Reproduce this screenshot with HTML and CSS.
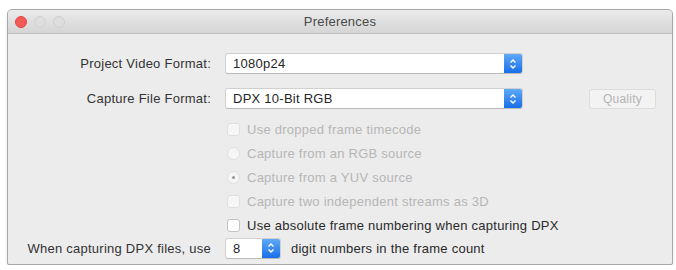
FILE: index.html
```html
<!DOCTYPE html>
<html>
<head>
<meta charset="utf-8">
<link rel="stylesheet" href="styles.css">
</head>
<body>
<div class="window">
  <div class="titlebar">
    <div class="lights">
      <span class="light red"></span>
      <span class="light grey"></span>
      <span class="light grey"></span>
    </div>
    <div class="title">Preferences</div>
  </div>
  <div class="content">
    <div class="row row-main">
      <div class="label">Project Video Format:</div>
      <div class="popup wide"><span class="value">1080p24</span><span class="cap"><svg width="8" height="12" viewBox="0 0 8 12"><path d="M1.5 4.5 L4 2 L6.5 4.5 M1.5 7.5 L4 10 L6.5 7.5" fill="none" stroke="#fff" stroke-width="1.4"/></svg></span></div>
    </div>
    <div class="row row-main second">
      <div class="label">Capture File Format:</div>
      <div class="popup wide"><span class="value">DPX 10-Bit RGB</span><span class="cap"><svg width="8" height="12" viewBox="0 0 8 12"><path d="M1.5 4.5 L4 2 L6.5 4.5 M1.5 7.5 L4 10 L6.5 7.5" fill="none" stroke="#fff" stroke-width="1.4"/></svg></span></div>
      <div class="button disabled">Quality</div>
    </div>
    <div class="options">
      <div class="opt disabled"><span class="check"></span>Use dropped frame timecode</div>
      <div class="opt disabled"><span class="radio"></span>Capture from an RGB source</div>
      <div class="opt disabled"><span class="radio on"></span>Capture from a YUV source</div>
      <div class="opt disabled"><span class="check"></span>Capture two independent streams as 3D</div>
      <div class="opt"><span class="check"></span>Use absolute frame numbering when capturing DPX</div>
    </div>
    <div class="row row-last">
      <div class="label">When capturing DPX files, use</div>
      <div class="popup small"><span class="value">8</span><span class="cap"><svg width="8" height="12" viewBox="0 0 8 12"><path d="M1.5 4.5 L4 2 L6.5 4.5 M1.5 7.5 L4 10 L6.5 7.5" fill="none" stroke="#fff" stroke-width="1.4"/></svg></span></div>
      <div class="after">digit numbers in the frame count</div>
    </div>
  </div>
</div>
</body>
</html>
```
FILE: styles.css
```css
html, body {
  margin: 0;
  padding: 0;
  background: #ffffff;
}
body {
  padding: 9px 3px 0 7px;
  font-family: "Liberation Sans", Arial, sans-serif;
  font-size: 13px;
  color: #2a2a2a;
}
.window {
  width: 664px;
  height: 254px;
  border: 1px solid #a9a9a9;
  border-radius: 5px 5px 2px 2px;
  background: #ececec;
  overflow: hidden;
  box-shadow: 0 1px 2px rgba(0,0,0,0.15);
}
.titlebar {
  height: 23px;
  background: linear-gradient(#ebebeb, #d5d5d5);
  border-bottom: 1px solid #bdbdbd;
  display: flex;
  align-items: center;
  position: relative;
}
.lights {
  display: flex;
  gap: 7px;
  padding-left: 7px;
}
.light {
  width: 12px;
  height: 12px;
  border-radius: 50%;
  box-sizing: border-box;
}
.light.red {
  background: #f25b57;
  border: 1px solid #e2453f;
}
.light.grey {
  background: #dedede;
  border: 1px solid #cfcfcf;
}
.title {
  position: absolute;
  left: 0;
  right: 0;
  text-align: center;
  color: #4a4a4a;
  font-size: 13px;
  letter-spacing: 0.2px;
}
.content {
  padding-top: 19px;
  letter-spacing: 0.25px;
}
.row {
  display: flex;
  align-items: center;
}
.label {
  width: 203px;
  text-align: right;
  margin-right: 14px;
  color: #333333;
}
.row-main {
  height: 21px;
}
.row-main.second {
  margin-top: 14px;
}
.popup {
  height: 21px;
  box-sizing: border-box;
  display: flex;
  background: #ffffff;
  border: 1px solid #d0d0d0;
  border-bottom-color: #b9b9b9;
  border-radius: 3px;
  overflow: hidden;
}
.popup.wide {
  width: 298px;
}
.popup.small {
  width: 56px;
}
.value {
  flex: 1;
  padding-left: 7px;
  line-height: 19px;
  color: #262626;
}
.cap {
  width: 18px;
  background: linear-gradient(#5ea9f7, #1a6ee8);
  display: flex;
  align-items: center;
  justify-content: center;
}
.button {
  margin-left: 66px;
  width: 67px;
  height: 20px;
  box-sizing: border-box;
  border: 1px solid #dcdcdc;
  border-radius: 3px;
  background: #f3f3f3;
  text-align: center;
  line-height: 18px;
  font-size: 12px;
}
.button.disabled {
  color: #b3b3b3;
}
.options {
  margin-top: 8px;
  padding-left: 219px;
}
.opt {
  height: 24px;
  display: flex;
  align-items: center;
  color: #2a2a2a;
}
.opt.disabled {
  color: #b6b6b6;
}
.check, .radio {
  width: 13px;
  height: 13px;
  box-sizing: border-box;
  margin-right: 7px;
  background: #ffffff;
  border: 1px solid #c3c3c3;
  position: relative;
}
.check {
  border-radius: 3px;
}
.opt.disabled .check, .opt.disabled .radio {
  border-color: #e0e0e0;
  background: #f6f6f6;
}
.radio {
  border-radius: 50%;
}
.radio.on::after {
  content: "";
  position: absolute;
  left: 4px;
  top: 4px;
  width: 3px;
  height: 3px;
  border-radius: 50%;
  background: #9a9a9a;
}
.row-last {
  height: 22px;
  margin-top: 0;
}
.after {
  margin-left: 10px;
  color: #2a2a2a;
}
```
